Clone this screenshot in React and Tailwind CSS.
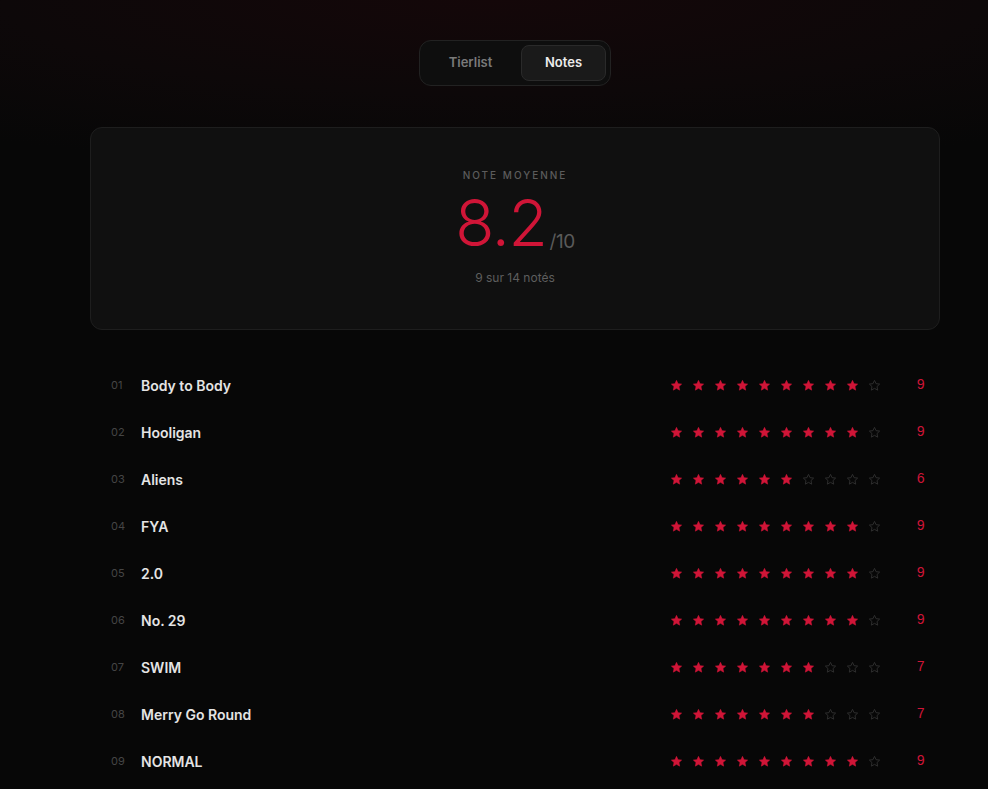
import React from "react";

const tracks = [
  { n: "01", title: "Body to Body", score: 9 },
  { n: "02", title: "Hooligan", score: 9 },
  { n: "03", title: "Aliens", score: 6 },
  { n: "04", title: "FYA", score: 9 },
  { n: "05", title: "2.0", score: 9 },
  { n: "06", title: "No. 29", score: 9 },
  { n: "07", title: "SWIM", score: 7 },
  { n: "08", title: "Merry Go Round", score: 7 },
  { n: "09", title: "NORMAL", score: 9 },
];

const STAR =
  "M12 2.5l2.9 6.1 6.6.8-4.9 4.6 1.3 6.6L12 17.3l-5.9 3.3 1.3-6.6-4.9-4.6 6.6-.8z";

function Star({ filled }) {
  return (
    <svg viewBox="0 0 24 24" className="w-[13px] h-[13px]">
      {filled ? (
        <path d={STAR} fill="#d01537" stroke="#d01537" strokeWidth="1" strokeLinejoin="round" />
      ) : (
        <path d={STAR} fill="none" stroke="#2e2e2e" strokeWidth="1.8" strokeLinejoin="round" />
      )}
    </svg>
  );
}

function Row({ n, title, score }) {
  return (
    <div className="flex items-center h-[47px] pl-[21px] pr-[15px]">
      <span className="w-[30px] text-[11px] text-[#454545]">{n}</span>
      <span className="flex-1 text-[14px] font-semibold text-[#e4e4e4]">{title}</span>
      <div className="flex gap-[9px]">
        {Array.from({ length: 10 }, (_, i) => (
          <Star key={i} filled={i < score} />
        ))}
      </div>
      <span className="w-[28px] ml-[16px] text-right text-[14px] text-[#d01537] font-['Liberation_Mono',monospace]">
        {score}
      </span>
    </div>
  );
}

export default function App() {
  return (
    <div className="min-h-[789px] pl-[42px] bg-[#070707] bg-[radial-gradient(ellipse_90%_170px_at_50%_0%,#140709_0%,#0d0809_55%,#070707_100%)] font-['Inter',sans-serif] overflow-hidden">
      <div className="w-[850px] mx-auto pt-[40px]">
        <div className="flex justify-center">
          <div className="flex items-center gap-[4px] p-[4px] rounded-xl bg-[#0e0e0e] border border-[#222222] h-[46px]">
            <button className="w-[93px] h-[36px] rounded-lg text-[13px] font-semibold text-[#7a7a7a]">
              Tierlist
            </button>
            <button className="w-[85px] h-[36px] rounded-lg text-[13px] font-semibold text-[#ececec] bg-[#1a1a1a] border border-[#2a2a2a]">
              Notes
            </button>
          </div>
        </div>

        <div className="mt-[41px] h-[203px] rounded-xl bg-[#101010] border border-[#1e1e1e] flex flex-col items-center pt-[40px]">
          <div className="text-[10px] tracking-[0.2em] text-[#5c5c5c] font-medium">NOTE MOYENNE</div>
          <div className="flex items-baseline mt-[6px]">
            <span className="text-[64px] leading-[68px] font-light text-[#d01537] tracking-[-0.02em]">8.2</span>
            <span className="text-[19px] text-[#5a5a5a] ml-[3px] tracking-tight relative top-[2px]">/10</span>
          </div>
          <div className="mt-[12px] text-[12px] text-[#5e5e5e]">9 sur 14 notés</div>
        </div>

        <div className="mt-[32px]">
          {tracks.map((t) => (
            <Row key={t.n} {...t} />
          ))}
        </div>
      </div>
    </div>
  );
}
